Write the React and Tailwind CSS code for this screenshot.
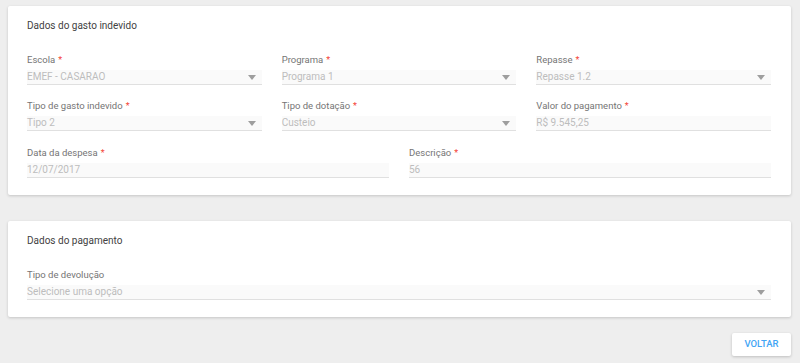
import React from 'react';

function Label({ text, required }) {
  return (
    <div className="text-[9.5px] leading-[12px] text-[#757575]">
      {text}
      {required && <span className="ml-[3px] text-[9px] text-[#f44336]">*</span>}
    </div>
  );
}

function Field({ label, value, required = true, select = false }) {
  return (
    <div className="flex flex-col">
      <Label text={label} required={required} />
      <div className="mt-[4px] flex h-[15px] items-center justify-between border-b border-[#e0e0e0] bg-[#fafafa]">
        <span className="text-[10px] leading-[14px] text-[#bdbdbd]">{value}</span>
        {select && (
          <svg width="8" height="5" viewBox="0 0 8 5" className="mr-[6px]">
            <path d="M0 0 L8 0 L4 5 Z" fill="#9e9e9e" />
          </svg>
        )}
      </div>
    </div>
  );
}

export default function App() {
  return (
    <div
      className="min-h-screen bg-[#eeeeee] pl-[8px] pr-[9px] pt-[6px] pb-[7px]"
      style={{ fontFamily: 'Roboto, "Liberation Sans", sans-serif' }}
    >
      {/* dados do gasto indevido */}
      <div className="h-[189px] rounded-[2px] bg-white pl-[19px] pr-[20px] pt-[13px] shadow-[0_1px_3px_rgba(0,0,0,0.18)]">
        <h2 className="text-[10px] leading-[14px] text-[#424242]">Dados do gasto indevido</h2>
        <div className="mt-[21px] grid grid-cols-3 gap-x-[20px] gap-y-[15px]">
          <Field label="Escola" value="EMEF - CASARAO" select />
          <Field label="Programa" value="Programa 1" select />
          <Field label="Repasse" value="Repasse 1.2" select />
          <Field label="Tipo de gasto indevido" value="Tipo 2" select />
          <Field label="Tipo de dotação" value="Custeio" select />
          <Field label="Valor do pagamento" value="R$ 9.545,25" />
        </div>
        <div className="mt-[16px] grid grid-cols-2 gap-x-[20px]">
          <Field label="Data da despesa" value="12/07/2017" />
          <Field label="Descrição" value="56" />
        </div>
      </div>

      {/* dados do pagamento */}
      <div className="mt-[26px] h-[96px] rounded-[2px] bg-white pl-[19px] pr-[20px] pt-[13px] shadow-[0_1px_3px_rgba(0,0,0,0.18)]">
        <h2 className="text-[10px] leading-[14px] text-[#424242]">Dados do pagamento</h2>
        <div className="mt-[21px]">
          <Field label="Tipo de devolução" value="Selecione uma opção" required={false} select />
        </div>
      </div>

      <div className="mt-[16px] flex justify-end">
        <button className="h-[23px] w-[59px] rounded-[2px] bg-white text-[9.5px] font-medium text-[#42a5f5] shadow-[0_1px_3px_rgba(0,0,0,0.2)]">
          VOLTAR
        </button>
      </div>
    </div>
  );
}
